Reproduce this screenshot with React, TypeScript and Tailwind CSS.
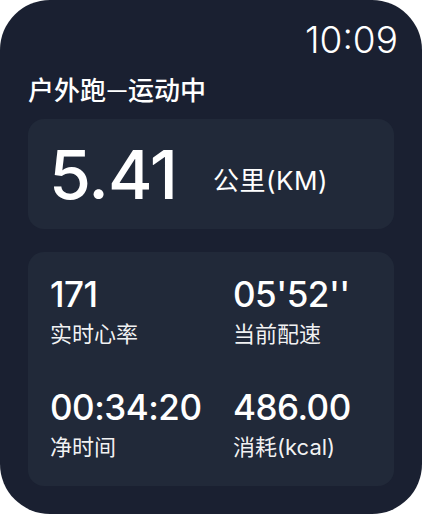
import React from "react";

const font = { fontFamily: '"Inter", "Noto Sans CJK SC", sans-serif' };

function Stat({ value, label }: { value: string; label: string }) {
  return (
    <div className="flex flex-col">
      <div className="text-[35px] leading-[40px] font-medium text-white tracking-[-0.5px]">{value}</div>
      <div className="mt-[6px] text-[22px] leading-[28px] text-white/95">{label}</div>
    </div>
  );
}

export default function App() {
  return (
    <div className="w-[422px] h-[514px] bg-white">
      <div
        className="w-[422px] h-[514px] rounded-[50px] bg-[#1a2031] flex flex-col px-[28px] text-white"
        style={font}
      >
        <div className="flex justify-end pt-[18px] -mr-[4px]">
          <div className="text-[37px] leading-[44px] font-light">10:09</div>
        </div>
        <div className="mt-[13px] h-[32px] text-[26px] leading-[32px] font-medium whitespace-nowrap">
          户外跑<span className="inline-block w-[22px] text-center text-[19px] leading-none relative -top-[3px]">—</span>运动中
        </div>
        <div className="mt-[12px] h-[110px] rounded-[16px] bg-[#212939] flex items-center pl-[21px]">
          <div className="text-[68px] leading-[70px] font-medium tracking-[-1px]">5.41</div>
          <div className="ml-[36px] mt-[14px] text-[26px] leading-[32px] tracking-[0.5px]">公里(KM)</div>
        </div>
        <div className="mt-[23px] h-[234px] rounded-[16px] bg-[#212939] grid grid-cols-[183px_1fr] content-start gap-y-[39px] pl-[22px] pt-[22px]">
          <Stat value="171" label="实时心率" />
          <Stat value="05'52''" label="当前配速" />
          <Stat value="00:34:20" label="净时间" />
          <Stat value="486.00" label="消耗(kcal)" />
        </div>
      </div>
    </div>
  );
}
